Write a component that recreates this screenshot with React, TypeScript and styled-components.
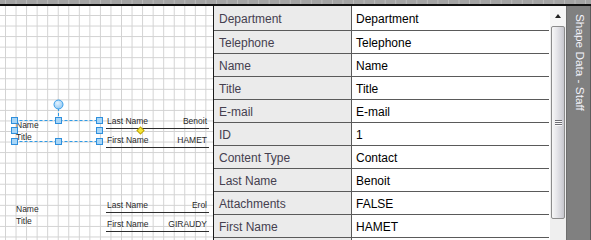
import React from 'react';
import styled, { createGlobalStyle } from 'styled-components';

const GlobalStyle = createGlobalStyle`
  html, body {
    margin: 0;
    padding: 0;
    background: #fff;
  }
  * {
    box-sizing: border-box;
  }
`;

const Page = styled.div`
  display: flex;
  flex-direction: column;
  width: 591px;
  height: 240px;
  overflow: hidden;
  font-family: 'Liberation Sans', Arial, sans-serif;
`;

const Ruler = styled.div`
  height: 6px;
  flex-shrink: 0;
  background-color: #a4a4a4;
  background-image: linear-gradient(to right, #bcbcbc 1px, transparent 1px);
  background-size: 10.55px 4px;
  background-position: 5px 0;
  background-repeat: repeat-x;
  border-bottom: 2px solid #111;
`;

const Main = styled.div`
  display: flex;
  flex: 1;
  min-height: 0;
`;

const Canvas = styled.div`
  position: relative;
  width: 214px;
  flex-shrink: 0;
  border-right: 1px solid #1a1a1a;
  background-color: #fff;
  background-image: linear-gradient(to right, #d2d2d2 1px, transparent 1px),
    linear-gradient(to bottom, #d2d2d2 1px, transparent 1px);
  background-size: 10.55px 10.55px;
  background-position: 5px 9px;
  overflow: hidden;
`;

const Overlay = styled.svg`
  position: absolute;
  left: 0;
  top: 0;
  pointer-events: none;
`;

const NameBlock = styled.div<{ $top: number }>`
  position: absolute;
  left: 16px;
  top: ${p => p.$top}px;
  font-size: 8.5px;
  line-height: 12px;
  color: #2a2a2a;
`;

const FieldBlock = styled.div<{ $top: number }>`
  position: absolute;
  left: 106px;
  top: ${p => p.$top}px;
  width: 103px;
  display: flex;
  flex-direction: column;
`;

const FieldRow = styled.div`
  display: flex;
  justify-content: space-between;
  align-items: flex-end;
  height: 19px;
  padding: 0 2px 2px 1px;
  border-bottom: 1px solid #2e2e2e;
  font-size: 8.5px;
  line-height: 10px;
  color: #2a2a2a;
`;

const DataPanel = styled.div`
  display: flex;
  flex-shrink: 0;
  background: #fff;
`;

const Table = styled.div`
  width: 335px;
  display: flex;
  flex-direction: column;
  overflow: hidden;
`;

const Row = styled.div`
  display: flex;
  flex-shrink: 0;
  height: 23px;
  border-bottom: 1px solid #5a5a5a;

  &:first-child {
    height: 25px;
  }
`;

const LabelCell = styled.div`
  width: 138px;
  display: flex;
  align-items: center;
  padding: 2px 0 0 5px;
  background: #ebebeb;
  border-right: 1px solid #5a5a5a;
  font-size: 12px;
  color: #45404f;
`;

const ValueCell = styled.div`
  flex: 1;
  display: flex;
  align-items: center;
  padding: 2px 0 0 4px;
  background: #fff;
  font-size: 12px;
  color: #000;
`;

const ScrollBar = styled.div`
  width: 16px;
  margin-left: 1px;
  display: flex;
  flex-direction: column;
  background: #efefef;
`;

const UpButton = styled.div`
  height: 20px;
  flex-shrink: 0;
  display: flex;
  align-items: center;
  justify-content: center;
  background: #f6f6f6;

  &::after {
    content: '';
    border-left: 3.5px solid transparent;
    border-right: 3.5px solid transparent;
    border-bottom: 4px solid #222;
  }
`;

const Thumb = styled.div`
  height: 193px;
  flex-shrink: 0;
  margin: 0 1px;
  border: 1px solid #8c8c8c;
  border-radius: 2px;
  background: linear-gradient(to right, #f7f7f7 0%, #e6e6ea 40%, #d2d2d8 80%, #c6c6cc 100%);
  display: flex;
  flex-direction: column;
  align-items: center;
  justify-content: center;
  gap: 1px;
`;

const Grip = styled.div`
  width: 7px;
  height: 1px;
  background: #6e6e74;
  box-shadow: 0 1px 0 #fafafa;
`;

const SideTab = styled.div`
  width: 25px;
  flex-shrink: 0;
  background: #808080;
  border-left: 1px solid #6e6e6e;
  border-right: 1px solid #5c5c5c;
  display: flex;
  justify-content: center;
  padding-top: 8px;
  padding-left: 2px;
`;

const TabLabel = styled.span`
  writing-mode: vertical-rl;
  font-size: 11.8px;
  color: #f2f2fa;
  white-space: nowrap;
`;

const DATA: [string, string][] = [
  ['Department', 'Department'],
  ['Telephone', 'Telephone'],
  ['Name', 'Name'],
  ['Title', 'Title'],
  ['E-mail', 'E-mail'],
  ['ID', '1'],
  ['Content Type', 'Contact'],
  ['Last Name', 'Benoit'],
  ['Attachments', 'FALSE'],
  ['First Name', 'HAMET'],
  ['', ''],
];

interface Person {
  top: number;
  last: string;
  first: string;
}

const PEOPLE: Person[] = [
  { top: 104, last: 'Benoit', first: 'HAMET' },
  { top: 188, last: 'Erol', first: 'GIRAUDY' },
];

const HANDLE_X = [14, 58, 99];
const HANDLE_Y = [114, 124, 135];

function Selection() {
  const handles: [number, number][] = [];
  HANDLE_X.forEach(x =>
    HANDLE_Y.forEach(y => {
      if (x === 58 && y === 124) return;
      handles.push([x, y]);
    }),
  );
  return (
    <Overlay width={214} height={234}>
      <defs>
        <radialGradient id="rot" cx="40%" cy="35%" r="70%">
          <stop offset="0%" stopColor="#e4f3ff" />
          <stop offset="100%" stopColor="#8cc6f2" />
        </radialGradient>
      </defs>
      <g stroke="#2e9be6" strokeWidth={1} strokeDasharray="3 2" fill="none">
        <line x1={14.5} y1={114.5} x2={99.5} y2={114.5} />
        <line x1={14.5} y1={135.5} x2={99.5} y2={135.5} />
        <line x1={58.5} y1={102} x2={58.5} y2={112} />
      </g>
      <circle cx={58.5} cy={98.5} r={4.5} fill="url(#rot)" stroke="#3a9ee8" />
      {handles.map(([x, y]) => (
        <rect
          key={`${x}-${y}`}
          x={x - 2.5}
          y={y - 2.5}
          width={6}
          height={6}
          fill="#a8d6f7"
          stroke="#2f8fdc"
        />
      ))}
      <rect
        x={138}
        y={122}
        width={5}
        height={5}
        transform="rotate(45 140.5 124.5)"
        fill="#f5e63a"
        stroke="#c2a800"
      />
    </Overlay>
  );
}

export default function App() {
  return (
    <Page>
      <GlobalStyle />
      <Ruler />
      <Main>
        <Canvas>
          {PEOPLE.map((p, i) => (
            <React.Fragment key={`person-${i}`}>
              <NameBlock $top={p.top + 9}>
                <div>Name</div>
                <div>Title</div>
              </NameBlock>
              <FieldBlock $top={p.top}>
                <FieldRow>
                  <span>Last Name</span>
                  <span>{p.last}</span>
                </FieldRow>
                <FieldRow>
                  <span>First Name</span>
                  <span>{p.first}</span>
                </FieldRow>
              </FieldBlock>
            </React.Fragment>
          ))}
          <Selection />
        </Canvas>
        <DataPanel>
          <Table>
            {DATA.map(([label, value], i) => (
              <Row key={`${label}-${i}`}>
                <LabelCell>{label}</LabelCell>
                <ValueCell>{value}</ValueCell>
              </Row>
            ))}
          </Table>
          <ScrollBar>
            <UpButton />
            <Thumb>
              <Grip />
              <Grip />
              <Grip />
            </Thumb>
          </ScrollBar>
        </DataPanel>
        <SideTab>
          <TabLabel>Shape Data - Staff</TabLabel>
        </SideTab>
      </Main>
    </Page>
  );
}
